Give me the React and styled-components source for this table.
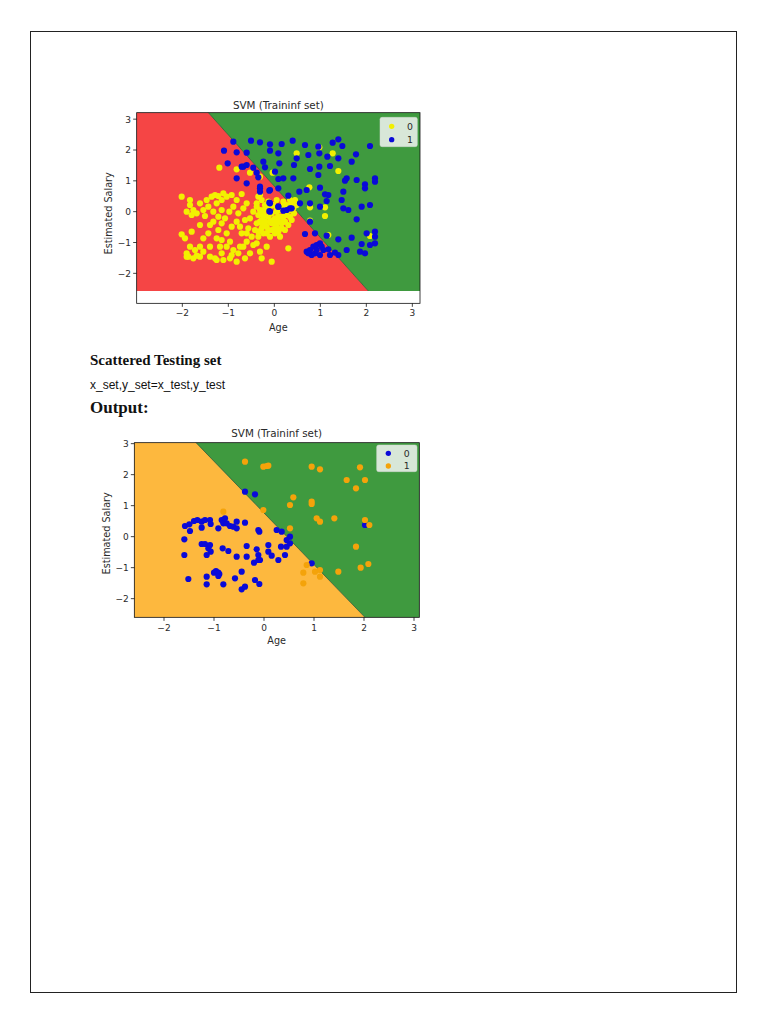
import React from "react";
import styled, { createGlobalStyle } from "styled-components";

const GlobalStyle = createGlobalStyle`
  html, body { margin: 0; padding: 0; background: #fff; }
`;

const Page = styled.div`
  box-sizing: border-box;
  margin: 31px 0 0 30px;
  width: 707px;
  height: 962px;
  border: 1px solid #222;
  padding: 58px 0 0 59px;
  display: flex;
  flex-direction: column;
  align-items: flex-start;
  color: #111;
`;

const Figure = styled.svg`
  display: block;
  width: 340px;
  height: ${(p) => p.$h}px;
  margin-top: ${(p) => p.$mt || 0}px;
`;

const Heading = styled.h3`
  margin: 11px 0 0;
  font: bold 15px/18px "Liberation Serif", "Times New Roman", serif;
`;

const CodeLine = styled.p`
  margin: 9px 0 0;
  font: 12px/15px "Liberation Sans", Arial, sans-serif;
`;

const OutputTitle = styled.h2`
  margin: 5px 0 0;
  font: bold 17px/20px "Liberation Serif", "Times New Roman", serif;
`;

const AxisText = styled.text`
  font-family: "DejaVu Sans", Verdana, sans-serif;
  font-size: ${(p) => p.$size || 27}px;
  fill: #2a2a2a;
`;

const parse = (s) =>
  s
    .trim()
    .split(/\s+/)
    .map((p) => p.split(",").map(Number));

const chart1 = {
  h: 250,
  vb: "0 0 1020 750",
  ax: { l: 140, r: 990, t: 68, b: 640 },
  left: "140,68 355,68 835,603 140,603",
  right: "355,68 990,68 990,603 835,603",
  line: [355, 68, 835, 603],
  leftColor: "#f54545",
  rightColor: "#3f9a3f",
  yTicks: [["3", 87.5], ["2", 180], ["1", 272.5], ["0", 365], ["−1", 457.5], ["−2", 550]],
  xTicks: [["−2", 277], ["−1", 415], ["0", 553], ["1", 691], ["2", 829], ["3", 967]],
  title: [565, 57],
  xlab: [565, 724],
  ylab: [55, 370],
  xtickY: 679,
  legend: { x: 870, y: 82, w: 112, h: 88, dy: [109, 149], c: ["#f2f000", "#0a0ad8"] },
  series: [
    {
      c: "#f2f000",
      pts: parse(`620,190 688,172 728,190 745,243 658,292 660,352 705,352 705,378 660,392 715,435 840,438 548,248
388,233 440,238 480,248 510,260 510,315 515,330
275,320 300,330 290,365 305,375 310,360 330,340 350,330 275,433 305,425 330,405 345,378 360,405 290,490 295,500 320,497 340,485 360,470 360,500 375,505 375,315 385,318 395,330 400,310 410,320 425,315 440,330 455,312 430,350 418,365 405,385 395,400 385,420 380,445 390,470 395,490 400,510 420,505 430,480 420,455 410,430 425,410 440,395 445,370 460,355 470,340 455,430 470,455 450,470 440,515 465,505 480,490 490,465 485,440 475,415 480,385 490,365 500,340 505,320 510,395 515,415 505,440 500,460 510,485 525,395 530,410 535,380 540,395 545,420 550,400 555,385 560,410 565,395 570,380 575,400 580,380 590,375 600,360 520,360 525,345 535,335 560,330 580,335 600,330 610,340 555,430 570,440 595,475 530,470 515,505 545,515 380,340 365,320 395,360 520,380 545,370 560,365 585,395 540,440 520,430
500,350 510,360 520,370 530,355 540,350 550,345 560,355 570,360 580,350 590,345 600,345 610,355 505,375 515,390 525,405 535,420 545,400 555,415 565,425 575,415 585,420 595,405 605,390 515,400 530,430 550,390 565,380 580,395 600,380 612,370 615,330 620,345 500,400 495,420 505,425
300,345 320,370 340,360 355,350 370,365 385,380 370,395 355,430 340,445 330,470 315,480 300,470 285,445 395,450 410,470 425,495 445,490 460,470 470,430 465,390 450,410 290,500 310,505 380,510 330,500`),
    },
    {
      c: "#0a0ad8",
      pts: parse(`430,155 483,152 510,157 540,163 575,162 608,152 645,165 685,170 728,158 745,148 757,168 840,168 402,182 440,187 470,188 540,182 565,190 620,205 655,195 688,190 712,200 798,193 413,220 460,230 490,233 520,215 525,232 568,220 612,225 660,237 688,230 720,228 785,215 745,205 440,265 505,262 555,245 565,267 580,265 610,265 685,255 770,265 765,272 800,270 825,283 855,265 855,275 510,295 540,300 565,295 595,317 628,305 650,300 690,293 705,313 715,315 760,305 825,295 540,340 565,350 590,360 630,340 660,340 690,350 710,333 755,330 760,355 775,360 815,350 840,345 540,365 600,355 660,395 800,388 830,430 855,425 855,440 855,460 645,432 675,430 710,437 745,448 785,443 815,462 840,465 810,485 825,490 770,480 650,485 660,480 670,470 680,465 690,460 675,490 690,495 700,480 665,495 655,490 680,480 695,470 720,495 745,495 715,478 735,488 455,230 470,225 470,280 500,248 510,290 510,305 538,302 538,338 538,363 565,350 580,362 605,355`),
    },
  ],
};

const chart2 = {
  h: 230,
  vb: "0 0 1020 690",
  ax: { l: 133, r: 988, t: 68, b: 592 },
  left: "133,68 318,68 825,592 133,592",
  right: "318,68 988,68 988,592 825,592",
  line: [318, 68, 825, 592],
  leftColor: "#fdb83e",
  rightColor: "#3f9a3f",
  yTicks: [["3", 71], ["2", 164], ["1", 257], ["0", 350], ["−1", 443], ["−2", 536]],
  xTicks: [["−2", 222], ["−1", 372], ["0", 522], ["1", 672], ["2", 822], ["3", 972]],
  title: [560, 51],
  xlab: [560, 672],
  ylab: [50, 340],
  xtickY: 632,
  legend: { x: 860, y: 75, w: 121, h: 80, dy: [100, 138], c: ["#0a0ad8", "#f4a30a"] },
  series: [
    {
      c: "#0a0ad8",
      pts: parse(`465,215 495,223 285,318 298,313 312,303 322,300 335,305 345,300 300,333 335,323 360,300 362,312 385,325 395,300 400,310 410,310 405,295 420,318 430,320 440,325 440,305 465,308 283,358 283,405 335,372 345,372 355,385 362,395 360,375 398,385 415,393 440,410 470,378 470,410 500,388 505,405 510,420 535,375 535,395 545,407 565,420 573,380 585,405 590,380 600,370 600,350 590,360 560,330 575,335 508,335 505,330 295,477 350,470 350,493 378,453 385,458 388,462 400,493 435,475 455,455 455,508 465,500 495,480 508,492 492,428 505,420 665,430 825,315 350,405 372,458 385,468`),
    },
    {
      c: "#f4a30a",
      pts: parse(`465,125 520,140 530,138 535,137 665,140 690,148 810,142 770,180 825,180 798,205 610,232 600,255 665,245 665,252 520,270 400,275 680,295 690,305 733,295 825,300 838,315 600,325 798,380 640,458 675,455 690,450 690,470 640,490 745,455 812,443 835,432 650,435`),
    },
  ],
};

function Chart({ cfg, mt }) {
  const { ax } = cfg;
  return (
    <Figure viewBox={cfg.vb} $h={cfg.h} $mt={mt}>
      <rect x={ax.l} y={ax.t} width={ax.r - ax.l} height={ax.b - ax.t} fill="#fff" />
      <polygon points={cfg.left} fill={cfg.leftColor} />
      <polygon points={cfg.right} fill={cfg.rightColor} />
      <line
        x1={cfg.line[0]}
        y1={cfg.line[1]}
        x2={cfg.line[2]}
        y2={cfg.line[3]}
        stroke="#224422"
        strokeWidth="2"
      />
      {cfg.series.map((s, i) =>
        s.pts.map(([x, y], j) => <circle key={`${i}-${j}`} cx={x} cy={y} r="9.3" fill={s.c} />)
      )}
      <rect
        x={ax.l}
        y={ax.t}
        width={ax.r - ax.l}
        height={ax.b - ax.t}
        fill="none"
        stroke="#111"
        strokeWidth="2.4"
      />
      {cfg.yTicks.map(([t, y]) => (
        <g key={`y${t}`}>
          <line x1={ax.l - 10.5} y1={y} x2={ax.l} y2={y} stroke="#111" strokeWidth="2.4" />
          <AxisText x={ax.l - 17} y={y + 10} textAnchor="end">
            {t}
          </AxisText>
        </g>
      ))}
      {cfg.xTicks.map(([t, x]) => (
        <g key={`x${t}`}>
          <line x1={x} y1={ax.b} x2={x} y2={ax.b + 10.5} stroke="#111" strokeWidth="2.4" />
          <AxisText x={x} y={cfg.xtickY} textAnchor="middle">
            {t}
          </AxisText>
        </g>
      ))}
      <AxisText x={cfg.title[0]} y={cfg.title[1]} textAnchor="middle" $size={31}>
        SVM (Traininf set)
      </AxisText>
      <AxisText x={cfg.xlab[0]} y={cfg.xlab[1]} textAnchor="middle" $size={29}>
        Age
      </AxisText>
      <AxisText
        x={cfg.ylab[0]}
        y={cfg.ylab[1]}
        textAnchor="middle"
        dominantBaseline="central"
        $size={29}
        transform={`rotate(-90 ${cfg.ylab[0]} ${cfg.ylab[1]})`}
      >
        Estimated Salary
      </AxisText>
      <rect
        x={cfg.legend.x}
        y={cfg.legend.y}
        width={cfg.legend.w}
        height={cfg.legend.h}
        rx="6"
        fill="#eef1ee"
        fillOpacity="0.88"
        stroke="#d0d6d0"
        strokeWidth="1.5"
      />
      {cfg.legend.dy.map((y, i) => (
        <g key={`l${i}`}>
          <circle cx={cfg.legend.x + 35} cy={y} r="8" fill={cfg.legend.c[i]} />
          <AxisText x={cfg.legend.x + 90} y={y + 10} textAnchor="middle" $size={28}>
            {i}
          </AxisText>
        </g>
      ))}
    </Figure>
  );
}

export default function App() {
  return (
    <>
      <GlobalStyle />
      <Page>
        <Chart cfg={chart1} />
        <Heading>Scattered Testing set</Heading>
        <CodeLine>x_set,y_set=x_test,y_test</CodeLine>
        <OutputTitle>Output:</OutputTitle>
        <Chart cfg={chart2} mt={2} />
      </Page>
    </>
  );
}
